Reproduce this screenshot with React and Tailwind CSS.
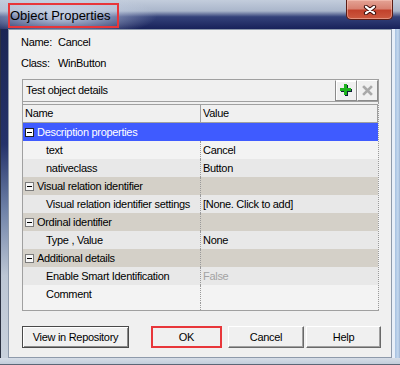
import React from 'react';

const rows = [
  { cat: true, selected: true, name: 'Description properties' },
  { name: 'text', value: 'Cancel', light: true },
  { name: 'nativeclass', value: 'Button' },
  { cat: true, name: 'Visual relation identifier' },
  { name: 'Visual relation identifier settings', value: '[None. Click to add]' },
  { cat: true, name: 'Ordinal identifier' },
  { name: 'Type , Value', value: 'None' },
  { cat: true, name: 'Additional details' },
  { name: 'Enable Smart Identification', value: 'False', disabled: true },
  { name: 'Comment', value: '', light: true },
];

function MinusBox({ selected }) {
  return (
    <span
      className={`flex h-[9px] w-[9px] shrink-0 items-center justify-center border ${
        selected ? 'border-[#202020] bg-white' : 'border-[#7a7a7a] bg-[#f6f6f6]'
      }`}
    >
      <span className="h-[1px] w-[5px] bg-black" />
    </span>
  );
}

function Row({ row }) {
  if (row.cat) {
    return (
      <div className={`flex h-[18px] ${row.selected ? 'bg-[#3f5bff] text-white' : 'bg-[#d4d0c8]'}`}>
        <div
          className={`flex w-[178px] items-center gap-[3px] border-r border-dotted pl-[2px] ${
            row.selected ? 'border-transparent' : 'border-[#9a9a9a]'
          }`}
        >
          <MinusBox selected={row.selected} />
          <span className="whitespace-nowrap">{row.name}</span>
        </div>
        <div className="flex-1" />
      </div>
    );
  }
  const bg = row.light ? 'bg-[#f3f3f3]' : 'bg-[#e8e8e8]';
  return (
    <div className={`flex h-[18px] ${bg}`}>
      <div className="flex w-[178px] items-center border-r border-dotted border-[#9a9a9a] pl-[23px]">
        <span className="whitespace-nowrap">{row.name}</span>
      </div>
      <div className={`flex flex-1 items-center pl-[2px] ${row.disabled ? 'text-[#a3a3a3]' : ''}`}>
        {row.value}
      </div>
    </div>
  );
}

function WinButton({ children, width, focused }) {
  return (
    <button
      className={`flex h-[22px] items-center justify-center bg-[#f0f0f0] ${width} ${
        focused
          ? 'border border-[#4a4a4a] shadow-[inset_1px_1px_0_#ffffff,inset_-1px_-1px_0_#8a8a8a]'
          : 'border border-t-white border-l-white border-r-[#696969] border-b-[#696969] shadow-[inset_-1px_-1px_0_#a0a0a0]'
      }`}
    >
      {children}
    </button>
  );
}

function TitleBar() {
  return (
    <div className="flex h-[29px] items-start bg-[radial-gradient(ellipse_95px_22px_at_62px_16px,rgba(205,216,234,0.95),rgba(205,216,234,0)),linear-gradient(180deg,#c3cddc_0%,#aab6cb_38%,#34427a_58%,#18225a_100%)]">
      <div className="ml-[8px] mt-[3px] flex h-[25px] w-[111px] items-center border-2 border-[#e8363a]">
        <span className="text-[13px] tracking-normal text-black">Object Properties</span>
      </div>
      <div className="ml-auto mr-[7px] flex h-[20px] w-[47px] items-center justify-center rounded-b-[5px] border border-t-0 border-[#5a1c14] bg-[linear-gradient(180deg,#e4a395_0%,#d88272_45%,#c2422c_55%,#cc5a40_100%)] shadow-[inset_0_0_0_1px_rgba(255,210,200,0.45)]">
        <svg width="14" height="10" viewBox="0 0 14 10">
          <path d="M3 1.8 L11 8.2 M11 1.8 L3 8.2" stroke="#3a0c08" strokeWidth="4.2" strokeLinecap="round" />
          <path d="M3 1.8 L11 8.2 M11 1.8 L3 8.2" stroke="#ffffff" strokeWidth="2.3" strokeLinecap="round" />
        </svg>
      </div>
    </div>
  );
}

export default function App() {
  return (
    <div className="flex h-[365px] w-[400px] flex-col overflow-hidden bg-[#c8d2de] font-['Liberation_Sans',Arial,sans-serif] text-[11px] tracking-[-0.3px] text-black">
      <TitleBar />

      <div className="flex h-[329px]">
        {/* left glass frame */}
        <div className="w-[8px] border-l border-[#2a3040] bg-[linear-gradient(180deg,#1b2654_0%,#24326a_35%,#6f82a8_55%,#bcc6d4_75%,#c9d1dc_100%)]" />

        <main className="flex w-[384px] flex-col border border-[#8e9aab] bg-[#f0f0f0]">
          <div className="mt-[4px] flex h-[16px] items-center pl-[12px]">
            <span className="w-[37px]">Name:</span>
            <span>Cancel</span>
          </div>
          <div className="mt-[5px] flex h-[16px] items-center pl-[12px]">
            <span className="w-[37px]">Class:</span>
            <span>WinButton</span>
          </div>

          {/* Test object details */}
          <div className="ml-[13px] mt-[8px] flex h-[232px] w-[357px] flex-col border-y border-l border-[#a0a0a0]">
            <div className="flex h-[22px] items-center border-b border-r border-[#a0a0a0] pl-[3px]">
              <span>Test object details</span>
              <div className="ml-auto flex self-start">
                <button className="flex h-[21px] w-[22px] items-center justify-center border border-t-white border-l-[#8a8a8a] border-r-[#8a8a8a] border-b-[#8a8a8a] bg-[#f0f0f0] shadow-[inset_1px_1px_0_#ffffff]">
                  <svg width="13" height="13" viewBox="0 0 13 13">
                    <path d="M5 1h3v4h4v3H8v4H5V8H1V5h4z" fill="#0e1e3a" />
                    <path d="M4 0h3v4h4v3H7v4H4V7H0V4h4z" fill="#1fb41f" />
                  </svg>
                </button>
                <button className="flex h-[21px] w-[21px] items-center justify-center border border-t-white border-l-white border-r-[#8a8a8a] border-b-[#8a8a8a] bg-[#f0f0f0]">
                  <svg width="11" height="11" viewBox="0 0 11 11">
                    <path d="M2 2 L9 9 M9 2 L2 9" stroke="#a9a9a9" strokeWidth="2.6" strokeLinecap="square" />
                  </svg>
                </button>
              </div>
            </div>

            <div className="flex flex-1 flex-col border-r border-dotted border-[#9a9a9a] pt-[2px]">
              <div className="flex h-[19px] border-y border-[#a0a0a0] bg-[#f0f0f0]">
                <div className="flex w-[178px] items-center border-r border-[#a0a0a0] pl-[2px]">Name</div>
                <div className="flex flex-1 items-center border-r border-[#a0a0a0] pl-[2px]">Value</div>
              </div>
              {rows.map((row) => (
                <Row key={row.name} row={row} />
              ))}
              <div className="flex flex-1 bg-[#f3f3f3]">
                <div className="w-[178px] border-r border-dotted border-[#9a9a9a]" />
              </div>
            </div>
          </div>

          {/* dialog buttons */}
          <div className="ml-[13px] mt-[15px] flex">
            <WinButton width="w-[107px]" focused>View in Repository</WinButton>
            <button className="ml-[22px] flex h-[22px] w-[71px] items-center justify-center border-2 border-[#e8363a] bg-[#f0f0f0]">
              OK
            </button>
            <div className="ml-[6px]">
              <WinButton width="w-[76px]">Cancel</WinButton>
            </div>
            <div className="ml-[2px]">
              <WinButton width="w-[75px]">Help</WinButton>
            </div>
          </div>
        </main>

        {/* right glass frame */}
        <div className="w-[8px] bg-[linear-gradient(90deg,#e8eff8_0%,#e8eff8_35%,#a9c3e2_42%,#c4d8ee_75%,#9bb4d4_100%)]" />
      </div>

      <div className="h-[7px] border-b border-[#5c6676] bg-[linear-gradient(180deg,#d6dde7,#c3cdda)]" />
    </div>
  );
}
